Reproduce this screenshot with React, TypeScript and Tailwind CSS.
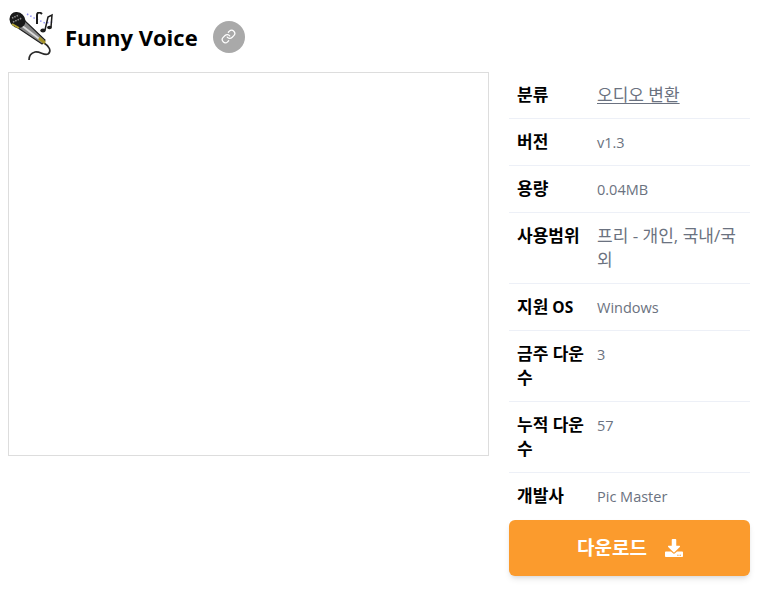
import { Link } from "lucide-react";
import { FaDownload } from "react-icons/fa";

const rows = [
  { label: "분류", value: "오디오 변환", link: true, ko: true },
  { label: "버전", value: "v1.3" },
  { label: "용량", value: "0.04MB" },
  { label: "사용범위", value: "프리 - 개인, 국내/국외", ko: true },
  { label: "지원", suffix: "OS", value: "Windows" },
  { label: "금주 다운수", value: "3" },
  { label: "누적 다운수", value: "57" },
  { label: "개발사", value: "Pic Master" },
];

function MicLogo() {
  return (
    <svg width="48" height="48" viewBox="0 0 48 48" className="shrink-0">
      {/* cable */}
      <path d="M36 31 C41 34 44 39 40 42 C36 44 32 39 27 40 C23 41 21 44 21 48" fill="none" stroke="#2a2a2a" strokeWidth="1.7" />
      {/* handle */}
      <path d="M7 14 L15 7 L37 28 L34 32 Z" fill="#858585" stroke="#1f1f1f" strokeWidth="1.2" />
      <path d="M13 13 L34 29" stroke="#dcdcdc" strokeWidth="1.6" />
      <path d="M31 26 L37 31" stroke="#a3922a" strokeWidth="3" />
      {/* head */}
      <ellipse cx="9.5" cy="8" rx="7.5" ry="8.5" transform="rotate(-45 9.5 8)" fill="#191919" />
      <path d="M4 12 L11 16" stroke="#b3a332" strokeWidth="2" />
      <path d="M4 6 L11 3 M5 10 L14 6" stroke="#8f8f8f" strokeWidth="1.6" strokeDasharray="1.5 1" />
      {/* dotted staff */}
      <path d="M19 2 L28 7 L37 11 L45 10" fill="none" stroke="#8f8ff0" strokeWidth="1.5" strokeDasharray="1.5 2.2" />
      {/* notes */}
      <path d="M29 12 V3 C29 0 32 0 34 2" fill="none" stroke="#1c1c1c" strokeWidth="2" />
      <ellipse cx="35" cy="18.5" rx="2.7" ry="2" fill="#1c1c1c" />
      <path d="M37 18 L40 5 L44 3 L43 15" fill="none" stroke="#1c1c1c" strokeWidth="1.5" />
      <ellipse cx="41.5" cy="15.5" rx="2.4" ry="1.8" fill="#1c1c1c" />
    </svg>
  );
}

export default function App() {
  return (
    <div className="h-[591px] w-[760px] overflow-hidden bg-white font-['Open_Sans','Noto_Sans_CJK_KR',sans-serif] text-black">
      {/* Title */}
      <div className="flex h-[64px] items-center pl-2 pt-[8px]">
        <MicLogo />
        <h1 className="ml-[9px] mt-[2px] text-[22px] font-bold leading-8">Funny Voice</h1>
        <div className="ml-[15px] mt-px flex h-8 w-8 items-center justify-center rounded-full bg-[#a9a9a9] text-white">
          <Link size={15} />
        </div>
      </div>

      <div className="flex items-start pl-2 pt-2">
        {/* Left side - preview */}
        <div className="h-[384px] w-[481px] border border-[#dddddd] bg-white" />

        {/* Right side - info */}
        <div className="ml-5 w-[241px]">
          {rows.map((r, i) => (
            <div
              key={r.label}
              className={`flex px-2 leading-6 ${i < rows.length - 1 ? "border-b border-[#edf0f7] py-[11px]" : "h-[47px] pt-[11px]"}`}
            >
              <div className="w-20 shrink-0 pr-2 text-[17px] font-bold">
                {r.label}
                {r.suffix && <span className="text-[15.5px]"> {r.suffix}</span>}
              </div>
              <div className={`min-w-0 flex-1 text-[#6b7280] ${r.ko ? "text-[17px]" : "h-6 pt-px text-[14.5px]"}`}>
                {r.link ? <span className="underline underline-offset-2">{r.value}</span> : r.value}
              </div>
            </div>
          ))}
          <button className="flex h-14 w-full items-center justify-center gap-[18px] rounded-md bg-[#fb9b2d] pl-px text-[19px] font-bold text-white shadow-md">
            다운로드
            <FaDownload size={18} />
          </button>
        </div>
      </div>
    </div>
  );
}
